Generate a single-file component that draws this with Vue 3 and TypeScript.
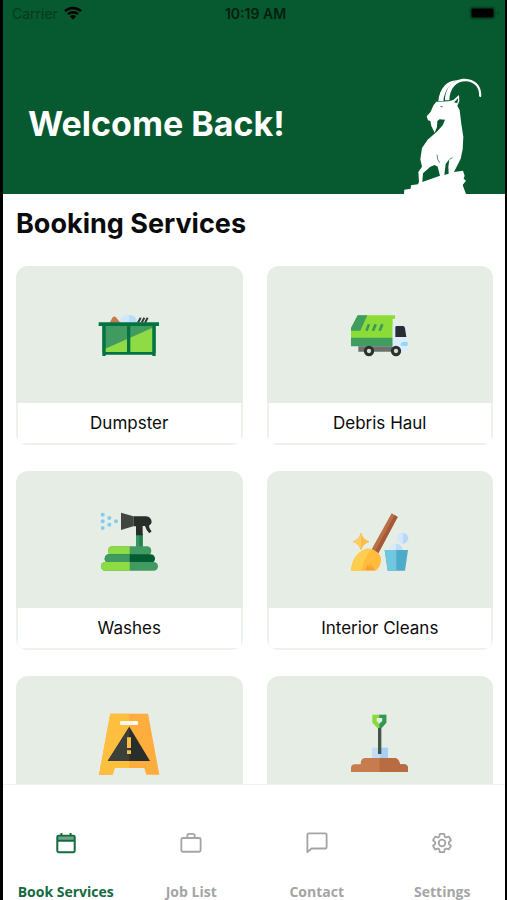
<script setup lang="ts">
import { ref } from 'vue'

interface Service {
  id: string
  label: string
}

interface Tab {
  id: string
  label: string
}

const services: Service[] = [
  { id: 'dumpster', label: 'Dumpster' },
  { id: 'debris', label: 'Debris Haul' },
  { id: 'washes', label: 'Washes' },
  { id: 'interior', label: 'Interior Cleans' },
  { id: 'hazard', label: '' },
  { id: 'garden', label: '' },
]

const tabs: Tab[] = [
  { id: 'book', label: 'Book Services' },
  { id: 'jobs', label: 'Job List' },
  { id: 'contact', label: 'Contact' },
  { id: 'settings', label: 'Settings' },
]

const activeTab = ref<string>('book')
</script>

<template>
  <div class="app">
    <header class="hero">
      <div class="status">
        <span class="carrier">
          Carrier
          <svg class="wifi" viewBox="0 0 18 14" aria-hidden="true">
            <path d="M1 5.2A11.6 11.6 0 0 1 17 5.2M4 8.2A7.2 7.2 0 0 1 14 8.2" fill="none" stroke="currentColor" stroke-width="2.5" />
            <path d="M9 13.6 5.9 10.4A4.4 4.4 0 0 1 12.1 10.4Z" fill="currentColor" />
          </svg>
        </span>
        <span class="time">10:19 AM</span>
        <svg class="battery" viewBox="0 0 30 14" aria-hidden="true">
          <rect x="0.5" y="0.5" width="26" height="13" rx="4" fill="#044523" />
          <rect x="2.500" y="2.500" width="22" height="9" rx="1.5" fill="#000" />
          <path d="M28 5v4q1.6-.6 1.6-2T28 5Z" fill="#044523" />
        </svg>
      </div>
      <div class="banner">
        <h1>Welcome Back!</h1>
        <svg class="goat" viewBox="42 24 234 348" aria-hidden="true">
          <path
            d="M42 372 43 359 62 356 63 346 84 343 87 335 85 306 96 290 91 268 96 234 113 209 142 184 158 166 165 149 149 148 142 153 141 171 134 188 124 168 121 153 114 151 110 139 121 127 131 105 139 95 176 94 190 90 207 75 208 94 202 107 209 121 214 162 220 201 218 238 212 266 192 306 219 302 224 317 221 326 228 332 218 345 228 372Z"
            fill="#fff"
          />
          <path d="M145 93C149 55 171 30 202 31C181 38 164 61 160 93ZM165 91C165 52 191 26 224 26C258 27 278 51 273 82L267 79C270 52 251 35 227 34C199 34 179 55 178 91Z" fill="#fff" />
          <path d="M149 110l10-2-3 4z" fill="#07592f" />
          <path d="M205 84l-3 16-10-3z" fill="#07592f" />
          <path d="M97 336 99 310 121 290 134 285 143 290 150 317ZM163 315 167 282 178 268 175 290 176 311Z" fill="#07592f" />
          <path d="M141 254q0 15 8 24M178 268l10-5" fill="none" stroke="#07592f" stroke-width="2" />
        </svg>
      </div>
    </header>

    <main class="content">
      <h2>Booking Services</h2>
      <div class="grid">
        <button v-for="service in services" :key="service.id" type="button" class="card">
          <span class="art">
            <svg v-if="service.id === 'dumpster'" class="short" viewBox="-3 -1 270 210" aria-hidden="true">
              <path d="M74 67 83 51q5-5 10 0l13 16z" fill="#c77b4d" />
              <path d="M104 67q4-24 28-23 23 1 25 23z" fill="#b9dcf8" />
              <path d="M104 67q4-24 28-23v23z" fill="#d0e8fb" />
              <path d="m159 67 8-15m3 15 8-15m2 15 8-15" stroke="#353b39" stroke-width="6" />
              <path d="M52 77h78v80H52z" fill="#419b61" />
              <path d="M135 77h77v80h-77z" fill="#419b61" />
              <path d="M54 148 203 82v76H54z" fill="#8edb45" />
              <path d="M41 66h181v11H41z" fill="#047342" />
              <path d="M52 76h10v91H52zM202 76h10v91h-10zM126 76h10v84h-10zM52 155h160v8H52z" fill="#047342" />
            </svg>
            <svg v-else-if="service.id === 'debris'" class="short" viewBox="0 -1 270 210" aria-hidden="true">
              <path d="M68 45h112v10h-7v82H48V83Z" fill="#8bdc36" />
              <path d="M68 45h29L76 91H48v-8Z" fill="#409c5f" />
              <path d="M48 112h125v26H48z" fill="#409c5f" />
              <path d="M70 138h103v16H70z" fill="#6b716d" />
              <path d="M173 74h31q8 0 10 9l5 26v45h-46z" fill="#ddecfc" />
              <path d="M185 77h19q5 0 6 7l4 26h-33V81q0-4 4-4z" fill="#292d31" />
              <path d="m94 91 8-19m12 19 8-19m12 19 8-19" stroke="#3d985d" stroke-width="8" />
              <path d="M199 127q8-5 19-2v11q-15 3-22-2z" fill="#91d7f6" />
              <g fill="#d7dcda" stroke="#2b302e" stroke-width="9">
                <circle cx="102" cy="152" r="11" />
                <circle cx="183" cy="152" r="11" />
              </g>
            </svg>
            <svg v-else-if="service.id === 'washes'" class="medium" viewBox="-3 -3 270 240" aria-hidden="true">
              <g fill="#7fcef0">
                <circle cx="53" cy="41" r="6" />
                <circle cx="53" cy="61" r="6" />
                <circle cx="53" cy="81" r="6" />
                <circle cx="73" cy="51" r="6" />
                <circle cx="73" cy="71" r="6" />
                <circle cx="93" cy="61" r="6" />
              </g>
              <path d="M153 98h20v40h-20z" fill="#379561" />
              <path d="M163 98h10v40h-10z" fill="#238050" />
              <path d="M145 46h38q16 2 17 17-1 8-7 10-3 6 7 18l-7 6q-9-8-13-22h-7v28h-20V76h-8z" fill="#292d2a" />
              <path d="m108 35 37 11v30l-37 11z" fill="#414641" />
              <rect x="69" y="136" width="130" height="27" rx="13" fill="#419b61" />
              <path d="M134 136H82a13 13 0 0 0 0 27h52z" fill="#8edc43" />
              <rect x="59" y="160" width="151" height="26" rx="13" fill="#035d32" />
              <path d="M134 160H72a13 13 0 0 0 0 26h62z" fill="#419b61" />
              <rect x="48" y="183" width="171" height="26" rx="13" fill="#419b61" />
              <path d="M134 183H61a13 13 0 0 0 0 26h73z" fill="#8edc43" />
            </svg>
            <svg v-else-if="service.id === 'interior'" class="medium" viewBox="0 -3 270 240" aria-hidden="true">
              <path d="m170 37 18 11-58 109-20-12z" fill="#b97047" />
              <path d="m179 42 9 6-58 109-10-6z" fill="#a45a38" />
              <path d="M48 209q4-50 45-65 17-4 32 8 14 10 13 28-2 18-16 29z" fill="#ffbd3b" />
              <path d="M48 209q4-50 45-65 10-3 18 0-25 26-31 65z" fill="#ffce4e" />
              <path d="m91 206 8-17 3 11 9-16-2 21 7-12 1 15H91z" fill="#f6a031" />
              <path d="M78 97q5 20 24 25-19 5-24 24-5-19-24-24 19-5 24-25z" fill="#ffbc45" stroke="#ffbc45" stroke-width="3" />
              <path d="M78 97v49q-5-19-24-24 19-5 24-25z" fill="#ffce62" />
              <path d="M162 149q2-17 20-21 18-1 22 21z" fill="#bdddf9" />
              <path d="M182 128q-18 4-20 21h20z" fill="#dceafb" />
              <circle cx="204" cy="112" r="16" fill="#b7d8fb" />
              <path d="M204 96a16 16 0 0 0 0 32z" fill="#d4e7fc" />
              <path d="M149 147h70l-9 62h-52z" fill="#4eabc9" />
              <path d="M149 147h35v62h-26z" fill="#70c7df" />
            </svg>
            <svg v-else-if="service.id === 'hazard'" class="tall" viewBox="-3 0 270 270" aria-hidden="true">
              <path d="M76 41h113l34 183h-39l-6-20H89l-6 20H42z" fill="#ffad3d" />
              <path d="M76 41h57v163H89l-6 20H42z" fill="#ffbf3e" />
              <rect x="105" y="63" width="54" height="12" rx="4" fill="#fff8ec" />
              <path d="M133 80 68 183h127z" fill="#292e2b" />
              <path d="M133 80 68 183h65z" fill="#3b403b" />
              <path d="M126 112h12v32h-12zM126 151h12v11h-12z" fill="#ffbd43" />
            </svg>
            <svg v-else class="tall" viewBox="0 0 270 270" aria-hidden="true">
              <path d="M111 143h48v34h-48z" fill="#c4ddf7" />
              <path d="M135 143h24v34h-24z" fill="#a8cff5" />
              <path d="M129 82h10v80h-10z" fill="#46544c" />
              <path fill-rule="evenodd" d="M112 44h42v24l-14 16h-13l-15-16zm13 10v9l8 8 9-8v-9z" fill="#8ada3f" />
              <path fill-rule="evenodd" d="M133 44h21v24l-14 16h-7zm0 10v17l9-8v-9z" fill="#35965a" />
              <path d="M48 216v-12q0-10 12-11h17q0-18 12-19h90q13 1 16 19h12q12 1 12 12v11z" fill="#c67c4e" />
              <path d="M134 174h45q13 1 16 19h12q12 1 12 12v11h-85z" fill="#b76c41" />
            </svg>
          </span>
          <span class="label">{{ service.label }}</span>
        </button>
      </div>
    </main>

    <nav class="tabs" aria-label="Main">
      <button
        v-for="tab in tabs"
        :key="tab.id"
        type="button"
        class="tab"
        :class="{ active: activeTab === tab.id }"
        @click="activeTab = tab.id"
      >
        <svg viewBox="0 0 24 24" aria-hidden="true">
          <g v-if="tab.id === 'book'">
            <path d="M3 5h18v4H3z" fill="currentColor" opacity="0.6" />
            <path
              d="M4 4h16q1.500 0 1.500 1.500v15Q21.500 22 20 22H4q-1.500 0-1.500-1.500v-15Q2.500 4 4 4ZM2.500 9.500h19M7 1v3M17 1v3"
              fill="none"
              stroke="currentColor"
              stroke-width="2.2"
            />
          </g>
          <path
            v-else-if="tab.id === 'jobs'"
            d="M3 6.5h18q1.5 0 1.5 1.5v12q0 1.500-1.500 1.500H3Q1.500 21.500 1.500 20V8q0-1.500 1.500-1.500ZM8 6V4q0-2 2-2h4q2 0 2 2v2"
            fill="none"
            stroke="currentColor"
            stroke-width="2"
          />
          <path
            v-else-if="tab.id === 'contact'"
            d="M3 1.500h18q1.500 0 1.500 1.500v13.500q0 1.500-1.500 1.500H6l-4.500 4V3q0-1.500 1.500-1.500Z"
            fill="none"
            stroke="currentColor"
            stroke-width="2"
            stroke-linejoin="round"
          />
          <g v-else fill="none" stroke="currentColor" stroke-width="2">
            <path
              d="M19.43 12.98c.04-.32.07-.64.07-.98 0-.34-.03-.66-.07-.98l2.11-1.65c.19-.15.24-.42.12-.64l-2-3.46c-.09-.16-.26-.25-.44-.25-.06 0-.12.01-.17.03l-2.49 1c-.52-.4-1.08-.73-1.69-.98l-.38-2.65C14.46 2.18 14.25 2 14 2h-4c-.25 0-.46.18-.49.42l-.38 2.65c-.61.25-1.17.59-1.69.98l-2.49-1c-.06-.02-.12-.03-.18-.03-.17 0-.34.09-.43.25l-2 3.46c-.13.22-.07.49.12.64l2.11 1.65c-.04.32-.07.65-.07.98 0 .33.03.66.07.98l-2.11 1.65c-.19.15-.24.42-.12.64l2 3.46c.09.16.26.25.44.25.06 0 .12-.01.17-.03l2.49-1c.52.4 1.08.73 1.69.98l.38 2.65c.03.24.24.42.49.42h4c.25 0 .46-.18.49-.42l.38-2.65c.61-.25 1.17-.59 1.69-.98l2.49 1c.06.02.12.03.18.03.17 0 .34-.09.43-.25l2-3.46c.12-.22.07-.49-.12-.64l-2.11-1.65Z"
            />
            <circle cx="12" cy="12" r="3.6" />
          </g>
        </svg>
        <span>{{ tab.label }}</span>
      </button>
    </nav>
  </div>
</template>

<style>
body {
  margin: 0;
  background: #000;
}
</style>

<style scoped>
.app {
  display: flex;
  flex-direction: column;
  box-sizing: border-box;
  height: 100vh;
  border-left: 3px solid #000;
  border-right: 2px solid #000;
  overflow: hidden;
  background: #fefffe;
  color: #0b0b0d;
  font-family: Inter, "Liberation Sans", sans-serif;
}

button {
  margin: 0;
  padding: 0;
  border: 0;
  color: inherit;
  font: inherit;
  cursor: pointer;
}

.hero {
  flex: none;
  background: #07592f;
}

.status {
  display: grid;
  grid-template-columns: 1fr auto 1fr;
  align-items: center;
  height: 26px;
  padding: 0 6px 0 9px;
  color: #02200f;
  font-size: 14px;
}

.carrier {
  display: flex;
  align-items: center;
  gap: 6px;
  color: #053a1e;
}

.wifi {
  width: 18px;
  height: 14px;
  color: #000;
}

.time {
  font-weight: 600;
}

.battery {
  justify-self: end;
  width: 30px;
  height: 14px;
}

.banner {
  display: flex;
  justify-content: space-between;
  align-items: flex-end;
  height: 168px;
  padding: 0 23px 0 25px;
}

h1 {
  margin: 0;
  padding-bottom: 48px;
  color: #fff;
  font-size: 34px;
  line-height: 44px;
  font-weight: 700;
}

.goat {
  flex: none;
  width: 78px;
  height: 116px;
}

.content {
  flex: 1;
  min-height: 0;
  overflow: hidden;
  padding: 12px 12px 0 13px;
}

h2 {
  margin: 0 0 24px;
  font-size: 27px;
  line-height: 36px;
  font-weight: 700;
}

.grid {
  display: grid;
  grid-template-columns: 1fr 1fr;
  gap: 26px 24px;
}

.card {
  display: flex;
  flex-direction: column;
  border-radius: 12px;
  overflow: hidden;
  background: #e5ede4;
}

.art {
  display: flex;
  align-items: center;
  justify-content: center;
  width: 100%;
  height: 137px;
}

.art svg {
  width: 90px;
}

.short {
  height: 70px;
}

.medium {
  height: 80px;
}

.tall {
  height: 90px;
}

.label {
  box-sizing: border-box;
  width: 100%;
  height: 42px;
  border: solid #edf2ed;
  border-width: 0 2px 2px;
  background: #fefffe;
  font-size: 17px;
  line-height: 40px;
}

.tabs {
  display: grid;
  grid-template-columns: repeat(4, 1fr);
  flex: none;
  box-sizing: border-box;
  height: 116px;
  border-top: 1px solid #eff1ef;
  background: #fefffe;
}

.tab {
  display: flex;
  flex-direction: column;
  align-items: center;
  gap: 30px;
  padding-top: 47px;
  background: none;
  color: #a5a5a5;
  font-family: "Open Sans", "Noto Sans", sans-serif;
  font-size: 14px;
  line-height: 16px;
  font-weight: 700;
  white-space: nowrap;
}

.tab svg {
  flex: none;
  width: 22px;
  height: 22px;
}

.tab.active {
  color: #146b40;
}
</style>
